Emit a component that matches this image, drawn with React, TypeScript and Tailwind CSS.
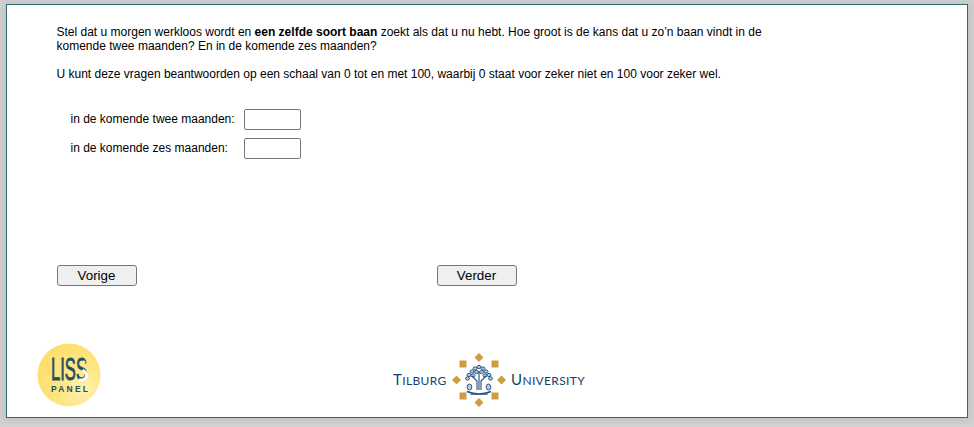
import React from "react";

function LissLogo() {
  return (
    <svg width="64" height="64" viewBox="0 0 64 64" className="block">
      <defs>
        <radialGradient id="g" cx="0.72" cy="0.72" r="0.75">
          <stop offset="0" stopColor="#fff2ad" />
          <stop offset="0.5" stopColor="#ffe684" />
          <stop offset="1" stopColor="#fedf6e" />
        </radialGradient>
      </defs>
      <circle cx="32" cy="32" r="31.5" fill="url(#g)" />
      <text x="14" y="37" fill="#1f4f63" stroke="#1f4f63" strokeWidth="0.8" fontFamily="'Liberation Sans',sans-serif" fontWeight="400" fontSize="31" textLength="36" lengthAdjust="spacingAndGlyphs">LISS</text>
      <path d="M45.500 27 Q50 30 49.500 33.500 Q48 38 42 36.500" fill="none" stroke="#ffffff" strokeWidth="2.800" />
      <circle cx="46.500" cy="19.500" r="2" fill="#ffe98c" />
      <text x="14" y="49" fill="#1f4f63" fontFamily="'Liberation Sans',sans-serif" fontWeight="700" fontSize="8.500" textLength="37" lengthAdjust="spacing">PANEL</text>
    </svg>
  );
}

function Seal() {
  const gold = "#cf9c41";
  const leaves = [
    [27, 14], [23, 15.5], [31, 15.5], [20, 18.5], [34, 18.5], [24.5, 19], [29.5, 19],
    [17, 22], [37, 22], [21, 22.5], [33, 22.5], [15.5, 25.5], [38.5, 25.5],
  ];
  return (
    <svg width="54" height="54" viewBox="0 0 54 54" className="block">
      <g fill={gold}>
        <path d="M27 0l4.500 4.500-4.500 4.500-4.500-4.500z" />
        <path d="M27 45l4.500 4.500-4.500 4.500-4.500-4.500z" />
        <path d="M0 27l4.500-4.500 4.500 4.500-4.500 4.500z" />
        <path d="M45 27l4.500-4.500 4.500 4.500-4.500 4.500z" />
        <rect x="7.500" y="7.500" width="7" height="7" />
        <rect x="39.500" y="7.500" width="7" height="7" />
        <rect x="7.500" y="39.500" width="7" height="7" />
        <rect x="39.500" y="39.500" width="7" height="7" />
      </g>
      <g fill="#b9cbdd" stroke="#1d4c7c" strokeWidth="0.9">
        {leaves.map(([x, y], i) => (
          <ellipse key={i} cx={x} cy={y} rx="2" ry="1.6" />
        ))}
        <ellipse cx="17.500" cy="34" rx="2.300" ry="3" />
        <ellipse cx="36.500" cy="34" rx="2.300" ry="3" />
      </g>
      <g fill="none" stroke="#1f4f80">
        <path d="M25 37V28l-5-5M29 37V28l5-5M27 37V19" strokeWidth="1.100" />
        <path d="M15 38.500q12 5 24 0" strokeWidth="1.500" />
        <path d="M18 41.500h18" strokeWidth="0.900" opacity="0.7" />
      </g>
    </svg>
  );
}

function TilburgLogo() {
  const word = "font-['Lato','Liberation_Sans',sans-serif] text-[#173f6e] leading-none whitespace-nowrap tracking-[0.35px] pb-[2px]";
  return (
    <div className="flex items-center">
      <div className={`${word} text-[12px] w-[59px]`}>
        <span className="text-[15px]">T</span>ILBURG
      </div>
      <Seal />
      <div className={`${word} text-[12px] ml-[5px]`}>
        <span className="text-[15px]">U</span>NIVERSITY
      </div>
    </div>
  );
}

function Field({ label }: { label: string }) {
  return (
    <div className="flex items-center h-[21px]">
      <span className="w-[187px] pl-[13.5px] pb-[2px] whitespace-nowrap">{label}</span>
      <input
        type="text"
        className="w-[57px] h-[21px] bg-white border border-[#767676] rounded-[2px] outline-none"
      />
    </div>
  );
}

function NavButton({ label }: { label: string }) {
  return (
    <button
      type="button"
      className="w-[80px] h-[21px] pr-[1px] bg-[#efefef] border border-[#767676] rounded-[3px] text-[13.33px] leading-none text-black"
    >
      {label}
    </button>
  );
}

export default function App() {
  return (
    <div className="w-[974px] h-[427px] overflow-hidden bg-[#d4d4d4] pt-[4px] pl-[6px] font-['Liberation_Sans',Arial,sans-serif] text-[12px] leading-[14px] text-black">
      <div className="w-[962px] h-[414px] bg-white border border-[#2f6a70] shadow-[0_0_8px_4px_#c4c4c4] flex flex-col pl-[50px] pt-[20px]">
        <p className="w-[720px] -ml-[0.5px]">
          Stel dat u morgen werkloos wordt en <b>een zelfde soort baan</b> zoekt als dat u nu hebt. Hoe groot is de kans dat u zo’n baan vindt in de komende twee maanden? En in de komende zes maanden?
        </p>
        <p className="mt-[14px] -ml-[0.5px]">
          U kunt deze vragen beantwoorden op een schaal van 0 tot en met 100, waarbij 0 staat voor zeker niet en 100 voor zeker wel.
        </p>
        <div className="mt-[28px] flex flex-col gap-[8px]">
          <Field label="in de komende twee maanden:" />
          <Field label="in de komende zes maanden:" />
        </div>
        <div className="mt-[106px] flex gap-[300px]">
          <NavButton label="Vorige" />
          <NavButton label="Verder" />
        </div>
        <div className="mt-[57px] flex items-start -ml-[20px]">
          <LissLogo />
          <div className="ml-[292px] mt-[10px]">
            <TilburgLogo />
          </div>
        </div>
      </div>
    </div>
  );
}
